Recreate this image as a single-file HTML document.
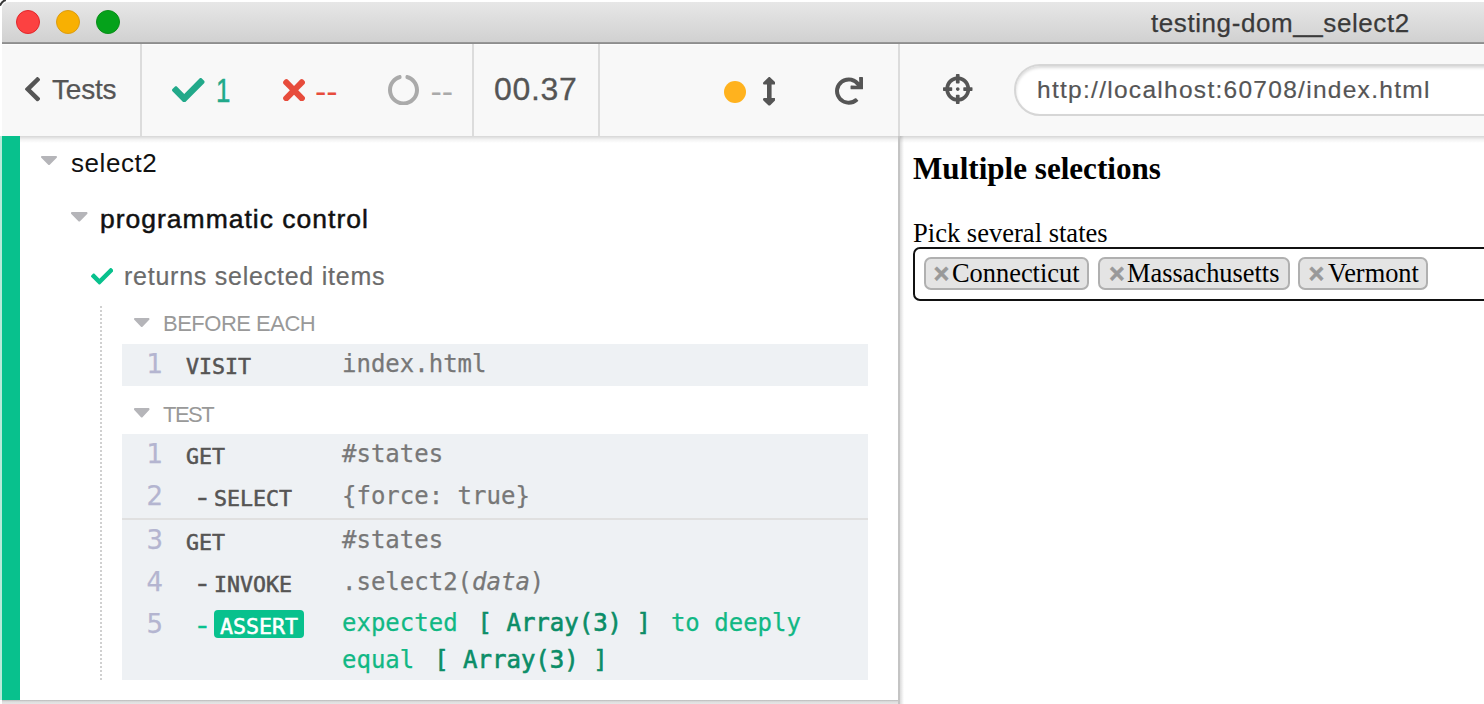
<!DOCTYPE html>
<html><head><meta charset="utf-8"><title>testing-dom__select2</title>
<style>
*{box-sizing:border-box;margin:0;padding:0}
html,body{width:1484px;height:704px;overflow:hidden;background:#fff}
body{position:relative;font-family:"Liberation Sans",sans-serif;color:#555}
.abs{position:absolute}
.t{position:absolute;white-space:nowrap;line-height:1}
#titlebar{left:2px;top:2px;width:1482px;height:40px;background:linear-gradient(#e7e7e7,#d1d1d1);border-top-left-radius:6px}
#tline{left:2px;top:42px;width:1482px;height:2px;background:linear-gradient(#9a9a9a,#8a8a8a)}
.dot{position:absolute;top:10px;width:24px;height:24px;border-radius:50%}
#hdr{left:2px;top:44px;width:1482px;height:92px;background:#f8f8f8;border-top:1px solid #fdfdfd}
.vdiv{position:absolute;top:44px;width:2px;height:92px;background:#dcdcdc}
#rep{left:2px;top:136px;width:896px;height:564px;background:#fff}
#bar{left:2px;top:136px;width:18px;height:564px;background:#08c18d}
#split{left:898px;top:136px;width:2px;height:568px;background:#c4c4c4}
.serif{font-family:"Liberation Serif",serif;color:#000}
.row{position:absolute;left:122px;width:746px;background:#eef1f4}
.num{color:#b4b5d0;-webkit-text-stroke:.25px #b4b5d0;font-size:26px;font-family:"DejaVu Sans","Liberation Sans",sans-serif}
.cmd{font-family:"DejaVu Sans Mono","Liberation Mono",monospace;font-weight:normal;-webkit-text-stroke:.55px;font-size:21.6px;color:#565554}
.msg{font-family:"DejaVu Sans Mono","Liberation Mono",monospace;font-size:24px;color:#777;-webkit-text-stroke:.25px}
.tag{position:absolute;top:257px;height:33px;background:#e4e4e4;border:2px solid #b0b0b0;border-radius:7px}
.dash{transform:translate(1.3px,-1.2px) scale(1.36,1.12);transform-origin:right center}
.msg b{font-weight:normal;-webkit-text-stroke:.6px #0b8d67;color:#0b8d67;margin:0 5.5px}
.x{font-size:27px;color:#999;font-weight:bold;-webkit-text-stroke:.5px #999}
.tg{font-size:26.4px}
</style></head><body>
<!-- window chrome -->
<svg class="abs" style="left:0;top:0" width="10" height="10"><path d="M0 5.8 A9.3 9.3 0 0 1 5.8 0" fill="none" stroke="#383838" stroke-width="2"/></svg>
<div id="titlebar" class="abs"></div>
<div id="tline" class="abs"></div>
<div class="dot" style="left:16px;background:#fc4141;border:1px solid #e2262a"></div>
<div class="dot" style="left:56px;background:#f8b002;border:1px solid #dc9c10"></div>
<div class="dot" style="left:96px;background:#05a21b;border:1px solid #0a8e19"></div>
<span class="t" id="title" style="left:1151px;top:10px;font-size:26px;letter-spacing:.58px;color:#3a3a3a;-webkit-text-stroke:.25px">testing-dom__select2</span>
<!-- reporter header -->
<div id="hdr" class="abs"></div>
<div class="vdiv" style="left:140px"></div>
<div class="vdiv" style="left:472px"></div>
<div class="vdiv" style="left:598px"></div>
<div class="vdiv" style="left:898px"></div>
<svg class="abs" style="left:25.3px;top:77.3px" width="15.1" height="24.3" viewBox="27.49 37.66 265.02 436.68" preserveAspectRatio="none"><path fill="#555" d="M34.52 239.03L228.87 44.69c9.37-9.37 24.57-9.37 33.94 0l22.67 22.67c9.36 9.36 9.37 24.52.04 33.9L131.49 256l154.02 154.75c9.34 9.38 9.32 24.54-.04 33.9l-22.67 22.67c-9.37 9.37-24.57 9.37-33.94 0L34.52 272.97c-9.37-9.37-9.37-24.57 0-33.94z"/></svg>
<span class="t" id="tests" style="left:52px;top:76px;font-size:28px;letter-spacing:-.2px;color:#555;-webkit-text-stroke:.25px">Tests</span>
<svg class="abs" style="left:172.1px;top:77.6px" width="32.6" height="24.5" viewBox="0.0 65.1 512.0 381.8" preserveAspectRatio="none"><path fill="#22a98a" d="M173.898 439.404l-166.4-166.4c-9.997-9.997-9.997-26.206 0-36.204l36.203-36.204c9.997-9.998 26.207-9.998 36.204 0L192 312.69 432.095 72.596c9.997-9.997 26.207-9.997 36.204 0l36.203 36.204c9.997 9.997 9.997 26.206 0 36.204l-294.4 294.401c-9.998 9.997-26.207 9.997-36.204-.001z"/></svg>
<span class="t" id="n1" style="left:216px;top:73px;font-size:34px;color:#22a98a;-webkit-text-stroke:.5px #22a98a;transform:scaleX(.76);transform-origin:left">1</span>
<svg class="abs" style="left:282.9px;top:78.7px" width="22.1" height="22.7" viewBox="0 80 352 352" preserveAspectRatio="none"><path fill="#e74c3c" d="M242.72 256l100.07-100.07c12.28-12.28 12.28-32.19 0-44.48l-22.24-22.24c-12.28-12.28-32.19-12.28-44.48 0L176 189.28 75.93 89.21c-12.28-12.28-32.19-12.28-44.48 0L9.21 111.45c-12.28 12.28-12.28 32.19 0 44.48L109.28 256 9.21 356.07c-12.28 12.28-12.28 32.19 0 44.48l22.24 22.24c12.28 12.28 32.2 12.28 44.48 0L176 322.72l100.07 100.07c12.28 12.28 32.2 12.28 44.48 0l22.24-22.24c12.28-12.28 12.28-32.19 0-44.48L242.72 256z"/></svg>
<span class="t" id="d1" style="left:315px;top:74px;font-size:34px;color:#e74c3c">--</span>
<svg class="abs" style="left:388px;top:74.5px" width="31" height="30.5" viewBox="8.0 15.01 496.0 488.99" preserveAspectRatio="none"><path fill="#aaa" d="M288 39.056v16.659c0 10.804 7.281 20.159 17.686 23.066C383.204 100.434 440 171.518 440 256c0 101.689-82.295 184-184 184-101.689 0-184-82.295-184-184 0-84.47 56.786-155.564 134.312-177.219C216.719 75.874 224 66.517 224 55.712V39.064c0-15.709-14.834-27.153-30.046-23.234C86.603 43.482 7.394 141.206 8.003 257.332c.72 137.052 111.477 246.956 248.531 246.667C393.255 503.711 504 392.788 504 256c0-115.633-79.14-212.779-186.211-240.236C302.678 11.889 288 23.456 288 39.056z"/></svg>
<span class="t" id="d2" style="left:430.5px;top:74px;font-size:34px;color:#aaa">--</span>
<span class="t" id="time" style="left:494px;top:73px;font-size:32px;letter-spacing:.7px;color:#555;-webkit-text-stroke:.3px">00.37</span>
<div class="abs" style="left:724px;top:80.6px;width:22px;height:22px;border-radius:50%;background:#ffb21e"></div>
<svg class="abs" style="left:762.8px;top:77.1px" width="12.6" height="28.6" viewBox="17.89 -0.0 220.21 512.0" preserveAspectRatio="none"><path fill="#555" d="M214.059 377.941H168V134.059h46.059c21.382 0 32.09-25.851 16.971-40.971L144.971 7.029c-9.373-9.373-24.568-9.373-33.941 0L24.971 93.088c-15.119 15.119-4.411 40.971 16.971 40.971H88v243.882H41.941c-21.382 0-32.09 25.851-16.971 40.971l86.059 86.059c9.373 9.373 24.568 9.373 33.941 0l86.059-86.059c15.12-15.119 4.412-40.971-16.97-40.971z"/></svg>
<svg class="abs" style="left:835.1px;top:77.1px" width="28.0" height="27.7" viewBox="8.0 -0.0 504.33 504.0" preserveAspectRatio="none"><path fill="#555" d="M500.33 0h-47.41a12 12 0 0 0-12 12.57l4 82.76A247.42 247.42 0 0 0 256 8C119.34 8 7.9 119.53 8 256.19 8.1 393.07 119.1 504 256 504a247.1 247.1 0 0 0 166.18-63.91 12 12 0 0 0 .48-17.43l-34-34a12 12 0 0 0-16.38-.55A176 176 0 1 1 402.1 157.8l-101.53-4.870a12 12 0 0 0-12.57 12v47.41a12 12 0 0 0 12 12h200.33a12 12 0 0 0 12-12V12a12 12 0 0 0-12-12z"/></svg>
<!-- AUT header -->
<svg class="abs" style="left:943px;top:74px" width="29.5" height="30" viewBox="0 0 512 512" preserveAspectRatio="none"><path fill="#555" d="M500 224h-30.364C455.724 130.325 381.675 56.276 288 42.364V12c0-6.627-5.373-12-12-12h-40c-6.627 0-12 5.373-12 12v30.364C130.325 56.276 56.276 130.325 42.364 224H12c-6.627 0-12 5.373-12 12v40c0 6.627 5.373 12 12 12h30.364C56.276 381.675 130.325 455.724 224 469.636V500c0 6.627 5.373 12 12 12h40c6.627 0 12-5.373 12-12v-30.364C381.675 455.724 455.724 381.675 469.636 288H500c6.627 0 12-5.373 12-12v-40c0-6.627-5.373-12-12-12zM288 404.634V364c0-6.627-5.373-12-12-12h-40c-6.627 0-12 5.373-12 12v40.634C165.826 392.232 119.783 346.243 107.366 288H148c6.627 0 12-5.373 12-12v-40c0-6.627-5.373-12-12-12h-40.634C119.768 165.826 165.757 119.783 224 107.366V148c0 6.627 5.373 12 12 12h40c6.627 0 12-5.373 12-12v-40.634C346.174 119.768 392.217 165.757 404.634 224H364c-6.627 0-12 5.373-12 12v40c0 6.627 5.373 12 12 12h40.634C392.232 346.174 346.243 392.217 288 404.634zM288 256c0 17.673-14.327 32-32 32s-32-14.327-32-32c0-17.673 14.327-32 32-32s32 14.327 32 32z"/></svg>
<div class="abs" style="left:1014px;top:64px;width:520px;height:51.5px;border-radius:26px;background:#fff;border:2px solid #d6d6d6;box-shadow:inset 0 2px 3px rgba(0,0,0,.14)"></div>
<span class="t" id="url" style="left:1037px;top:77.6px;font-size:24.5px;letter-spacing:1.28px;color:#555;-webkit-text-stroke:.2px">http://localhost:60708/index.html</span>
<!-- reporter body -->
<div id="rep" class="abs"></div>
<div class="abs" style="left:2px;top:136px;width:1482px;height:7px;background:linear-gradient(rgba(0,0,0,.16),rgba(0,0,0,.05) 50%,rgba(0,0,0,0))"></div>
<div class="abs" style="left:0;top:136px;width:2px;height:564px;background:#b8ead9"></div>
<div id="bar" class="abs"></div>
<svg class="abs" style="left:41px;top:156px" width="16" height="9" viewBox="11.3 192 297.31 168.65" preserveAspectRatio="none"><path fill="#b5b5b9" d="M31.3 192h257.3c17.8 0 26.7 21.5 14.1 34.1L174.1 354.8c-7.8 7.8-20.5 7.8-28.3 0L17.2 226.1C4.6 213.500 13.5 192 31.3 192z"/></svg>
<span class="t" id="s1" style="left:71px;top:150px;font-size:26px;letter-spacing:.55px;color:#111">select2</span>
<svg class="abs" style="left:71px;top:212px" width="16.5" height="9.5" viewBox="11.3 192 297.31 168.65" preserveAspectRatio="none"><path fill="#b5b5b9" d="M31.3 192h257.3c17.8 0 26.7 21.5 14.1 34.1L174.1 354.8c-7.8 7.8-20.5 7.8-28.3 0L17.2 226.1C4.6 213.500 13.5 192 31.3 192z"/></svg>
<span class="t" id="s2" style="left:100px;top:206.3px;font-size:26.5px;letter-spacing:1px;color:#111;-webkit-text-stroke:.5px #111">programmatic control</span>
<svg class="abs" style="left:90.5px;top:268px" width="22.5" height="16.5" viewBox="0.0 65.1 512.0 381.8" preserveAspectRatio="none"><path fill="#08c18d" d="M173.898 439.404l-166.4-166.4c-9.997-9.997-9.997-26.206 0-36.204l36.203-36.204c9.997-9.998 26.207-9.998 36.204 0L192 312.69 432.095 72.596c9.997-9.997 26.207-9.997 36.204 0l36.203 36.204c9.997 9.997 9.997 26.206 0 36.204l-294.4 294.401c-9.998 9.997-26.207 9.997-36.204-.001z"/></svg>
<span class="t" id="s3" style="left:124px;top:263.5px;font-size:25px;letter-spacing:.76px;color:#6b6b6b;-webkit-text-stroke:.2px">returns selected items</span>
<svg class="abs" style="left:100px;top:306px" width="2" height="374"><line x1="1" y1="0" x2="1" y2="374" stroke="#d0d0d0" stroke-width="2" stroke-dasharray="2 2"/></svg>
<svg class="abs" style="left:134px;top:318px" width="15.5" height="9" viewBox="11.3 192 297.31 168.65" preserveAspectRatio="none"><path fill="#b5b5b9" d="M31.3 192h257.3c17.8 0 26.7 21.5 14.1 34.1L174.1 354.8c-7.8 7.8-20.5 7.8-28.3 0L17.2 226.1C4.6 213.500 13.5 192 31.3 192z"/></svg>
<span class="t" id="be" style="left:163px;top:313px;font-size:22px;letter-spacing:-.5px;color:#999">BEFORE EACH</span>
<div class="row" style="top:344px;height:42px"></div>
<span class="t num" style="left:146.6px;top:351px">1</span>
<span class="t cmd" style="left:186px;top:356px">VISIT</span>
<span class="t msg" style="left:342px;top:352px">index.html</span>
<svg class="abs" style="left:134px;top:408px" width="15.5" height="9.5" viewBox="11.3 192 297.31 168.65" preserveAspectRatio="none"><path fill="#b5b5b9" d="M31.3 192h257.3c17.8 0 26.7 21.5 14.1 34.1L174.1 354.8c-7.8 7.8-20.5 7.8-28.3 0L17.2 226.1C4.6 213.500 13.5 192 31.3 192z"/></svg>
<span class="t" id="te" style="left:163px;top:403.5px;font-size:22px;letter-spacing:-1.5px;color:#999">TEST</span>
<div class="row" style="top:434px;height:246px"></div>
<div class="abs" style="left:122px;top:518px;width:746px;height:1.5px;background:#e0e0e0"></div>
<span class="t num" style="left:146.6px;top:441px">1</span>
<span class="t cmd" style="left:186px;top:446px">GET</span>
<span class="t msg" style="left:342px;top:442px">#states</span>
<span class="t num" style="left:146.6px;top:483px">2</span>
<span class="t cmd dash" style="left:197px;top:488px">-</span>
<span class="t cmd" style="left:214px;top:488px">SELECT</span>
<span class="t msg" style="left:342px;top:484px">{force: true}</span>
<span class="t num" style="left:146.6px;top:527px">3</span>
<span class="t cmd" style="left:186px;top:532px">GET</span>
<span class="t msg" style="left:342px;top:528px">#states</span>
<span class="t num" style="left:146.6px;top:569px">4</span>
<span class="t cmd dash" style="left:197px;top:574px">-</span>
<span class="t cmd" style="left:214px;top:574px">INVOKE</span>
<span class="t msg" style="left:342px;top:570px">.select2(<i>data</i>)</span>
<span class="t num" style="left:146.6px;top:611px">5</span>
<span class="t cmd dash" style="left:197px;top:616px;color:#08c18d">-</span>
<div class="abs" style="left:214px;top:610px;width:90px;height:28px;border-radius:4px;background:#08c18d"></div>
<span class="t cmd" style="left:220px;top:616px;color:#fff">ASSERT</span>
<span class="t msg" style="left:342px;top:611px;color:#11b884">expected <b>[ Array(3) ]</b> to deeply</span>
<span class="t msg" style="left:342px;top:648px;color:#11b884">equal <b>[ Array(3) ]</b></span>
<!-- bottom shadow under reporter -->
<div class="abs" style="left:2px;top:700px;width:896px;height:4px;background:linear-gradient(#b9b9b9,#dedede 45%,#e6e6e6)"></div>
<!-- splitter -->
<div id="split" class="abs"></div>
<div class="abs" style="left:900px;top:136px;width:4px;height:568px;background:linear-gradient(90deg,rgba(0,0,0,.14),rgba(0,0,0,0))"></div>
<!-- AUT content -->
<span class="t serif" id="h3" style="left:913px;top:152.5px;font-size:31.1px;font-weight:bold">Multiple selections</span>
<span class="t serif" id="lab" style="left:913px;top:219.5px;font-size:26.55px">Pick several states</span>
<div class="abs" style="left:913px;top:247px;width:620px;height:54px;border:2px solid #111;border-radius:7px;background:#fff"></div>
<div class="tag" style="left:924px;width:165px"></div>
<div class="tag" style="left:1098px;width:192px"></div>
<div class="tag" style="left:1298px;width:130px"></div>
<span class="t x" style="left:933.5px;top:260.5px">×</span>
<span class="t serif tg" style="left:952px;top:260px">Connecticut</span>
<span class="t x" style="left:1109px;top:260.5px">×</span>
<span class="t serif tg" style="left:1127px;top:260px">Massachusetts</span>
<span class="t x" style="left:1308.5px;top:260.5px">×</span>
<span class="t serif tg" style="left:1328px;top:260px">Vermont</span>
</body></html>
